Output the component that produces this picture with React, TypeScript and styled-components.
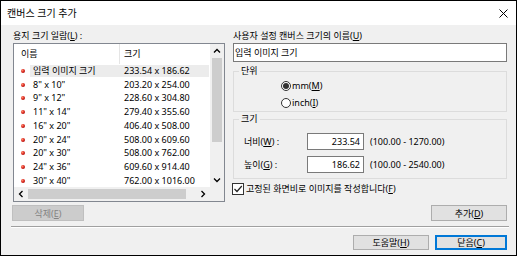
import React from 'react';
import styled, {createGlobalStyle} from "styled-components";

const GlobalStyle = createGlobalStyle`
  html, body {
    margin: 0;
    padding: 0;
    background: #fff;
  }
  body {
    font-family: "Noto Sans", "Noto Sans CJK KR", sans-serif;
    font-size: 9px;
    color: #000;
  }
  * {
    box-sizing: border-box;
  }
  u {
    text-decoration: underline;
    text-underline-offset: 1px;
  }
`

const paperSizes = [
    {name: '입력 이미지 크기', size: '233.54 x 186.62'},
    {name: '8" x 10"', size: '203.20 x 254.00'},
    {name: '9" x 12"', size: '228.60 x 304.80'},
    {name: '11" x 14"', size: '279.40 x 355.60'},
    {name: '16" x 20"', size: '406.40 x 508.00'},
    {name: '20" x 24"', size: '508.00 x 609.60'},
    {name: '20" x 30"', size: '508.00 x 762.00'},
    {name: '24" x 36"', size: '609.60 x 914.40'},
    {name: '30" x 40"', size: '762.00 x 1016.00'},
];

const Chevron = (props: { dir: 'up' | 'down' | 'left' | 'right' }) => {
    const rot = {up: 0, right: 90, down: 180, left: 270}[props.dir];
    return (
        <svg width="8" height="8" viewBox="0 0 8 8" style={{transform: `rotate(${rot}deg)`}}>
            <path d="M1 5.5 L4 2.5 L7 5.5" fill="none" stroke="#000" strokeWidth="1.3"/>
        </svg>
    );
};

export default function App() {
    return (
        <>
            <GlobalStyle/>
            <Window>
                <TitleBar>
                    <Title>캔버스 크기 추가</Title>
                    <svg width="9" height="9" viewBox="0 0 9 9">
                        <path d="M0.5 0.5 L8.5 8.5 M8.5 0.5 L0.5 8.5" stroke="#000" strokeWidth="1"/>
                    </svg>
                </TitleBar>
                <Body>
                    <Columns>
                        <LeftCol>
                            <Label>용지 크기 일람(<u>L</u>) :</Label>
                            <ListBox>
                                <ListContent>
                                    <Header>
                                        <HeaderName>이름</HeaderName>
                                        <HeaderSize>크기</HeaderSize>
                                    </Header>
                                    {paperSizes.map((item, index) => (
                                        <Row key={index}>
                                            <BulletCell><Bullet/></BulletCell>
                                            <RowBody $selected={index === 0}>
                                                <NameCell>{item.name}</NameCell>
                                                <SizeCell>{item.size}</SizeCell>
                                            </RowBody>
                                        </Row>
                                    ))}
                                </ListContent>
                                <VScroll>
                                    <ArrowBox><Chevron dir="up"/></ArrowBox>
                                    <VThumb/>
                                    <Spacer/>
                                    <ArrowBox><Chevron dir="down"/></ArrowBox>
                                </VScroll>
                                <HScroll>
                                    <ArrowBox><Chevron dir="left"/></ArrowBox>
                                    <HThumb/>
                                    <Spacer/>
                                    <ArrowBox><Chevron dir="right"/></ArrowBox>
                                </HScroll>
                                <Corner/>
                            </ListBox>
                            <DeleteButton>삭제(<u>E</u>)</DeleteButton>
                        </LeftCol>
                        <RightCol>
                            <Label>사용자 설정 캔버스 크기의 이름(<u>U</u>)</Label>
                            <NameInput readOnly value="입력 이미지 크기"/>
                            <UnitGroup>
                                <Legend>단위</Legend>
                                <UnitBody>
                                    <RadioRow>
                                        <Radio $checked/>
                                        <span>mm(<u>M</u>)</span>
                                    </RadioRow>
                                    <RadioRow>
                                        <Radio/>
                                        <span>inch(<u>I</u>)</span>
                                    </RadioRow>
                                </UnitBody>
                            </UnitGroup>
                            <SizeGroup>
                                <Legend>크기</Legend>
                                <SizeBody>
                                    <SizeRow>
                                        <SizeLabel>너비(<u>W</u>) :</SizeLabel>
                                        <NumberInput readOnly value="233.54"/>
                                        <Range>(100.00 - 1270.00)</Range>
                                    </SizeRow>
                                    <SizeRow>
                                        <SizeLabel>높이(<u>G</u>) :</SizeLabel>
                                        <NumberInput readOnly value="186.62"/>
                                        <Range>(100.00 - 2540.00)</Range>
                                    </SizeRow>
                                </SizeBody>
                            </SizeGroup>
                            <CheckRow>
                                <CheckBox>
                                    <svg width="10" height="10" viewBox="0 0 10 10">
                                        <path d="M1.5 5 L4 7.5 L8.8 2" fill="none" stroke="#222" strokeWidth="1.2"/>
                                    </svg>
                                </CheckBox>
                                <span>고정된 화면비로 이미지를 작성합니다(<u>F</u>)</span>
                            </CheckRow>
                            <AddButton>추가(<u>D</u>)</AddButton>
                        </RightCol>
                    </Columns>
                    <Separator/>
                    <Footer>
                        <Button $width={76}>도움말(<u>H</u>)</Button>
                        <Button $width={72} $default>닫음(<u>C</u>)</Button>
                    </Footer>
                </Body>
            </Window>
        </>
    );
}

const Window = styled.div`
  width: 517px;
  height: 256px;
  border: 1px solid #000;
  background: #f0f0f0;
  display: flex;
  flex-direction: column;
`
const TitleBar = styled.div`
  height: 24px;
  background: #fff;
  display: flex;
  align-items: center;
  justify-content: space-between;
  padding: 0 8px 0 6px;
`
const Title = styled.span`
  font-size: 10px;
  line-height: 12px;
`
const Body = styled.div`
  flex: 1;
  display: flex;
  flex-direction: column;
  padding: 5px 9px 0 11px;
`
const Columns = styled.div`
  display: flex;
  gap: 8px;
`
const LeftCol = styled.div`
  width: 213px;
  padding-left: 1px;
  display: flex;
  flex-direction: column;
`
const RightCol = styled.div`
  flex: 1;
  display: flex;
  flex-direction: column;
`
const Label = styled.div`
  height: 12px;
  line-height: 12px;
  margin-bottom: 1px;
  white-space: nowrap;
`
const ListBox = styled.div`
  height: 159px;
  border: 1px solid #828790;
  background: #fff;
  display: grid;
  grid-template-columns: 1fr 14px;
  grid-template-rows: 1fr 14px;
`
const ListContent = styled.div`
  overflow: hidden;
`
const Header = styled.div`
  height: 20px;
  display: flex;
  line-height: 20px;
`
const HeaderName = styled.div`
  width: 106px;
  padding-left: 7px;
  border-right: 1px solid #e5e5e5;
`
const HeaderSize = styled.div`
  padding-left: 4px;
`
const Row = styled.div`
  height: 13.75px;
  display: flex;
  align-items: center;
  white-space: nowrap;
`
const BulletCell = styled.div`
  width: 16px;
  padding-left: 7px;
  display: flex;
  align-items: center;
`
const Bullet = styled.span`
  width: 4px;
  height: 4px;
  border-radius: 50%;
  background: radial-gradient(circle at 35% 35%, #ff8a6a 0%, #d8201a 50%, #7a0c08 100%);
`
const RowBody = styled.div<{ $selected?: boolean }>`
  display: flex;
  height: 12px;
  line-height: 12px;
  width: 179px;
  background: ${props => props.$selected ? '#ececec' : 'transparent'};
`
const NameCell = styled.div`
  width: 90px;
  padding-left: 3px;
`
const SizeCell = styled.div`
  padding-left: 4px;
`
const VScroll = styled.div`
  background: #f0f0f0;
  display: flex;
  flex-direction: column;
  align-items: center;
`
const HScroll = styled.div`
  background: #f0f0f0;
  display: flex;
  align-items: center;
`
const Corner = styled.div`
  background: #f0f0f0;
`
const ArrowBox = styled.div`
  width: 14px;
  height: 14px;
  flex-shrink: 0;
  display: flex;
  align-items: center;
  justify-content: center;
`
const Spacer = styled.div`
  flex: 1;
`
const VThumb = styled.div`
  width: 10px;
  height: 84px;
  background: #cdcdcd;
`
const HThumb = styled.div`
  width: 158px;
  height: 10px;
  background: #cdcdcd;
`
const ButtonBase = styled.div`
  display: flex;
  align-items: center;
  justify-content: center;
  background: #e1e1e1;
  border: 1px solid #adadad;
  white-space: nowrap;
`
const DeleteButton = styled(ButtonBase)`
  margin: 3px 0 0 -1px;
  width: 72px;
  height: 16px;
  background: #cccccc;
  border-color: #bfbfbf;
  color: #838383;
`
const AddButton = styled(ButtonBase)`
  margin-top: auto;
  align-self: flex-end;
  width: 76px;
  height: 16px;
`
const Button = styled(ButtonBase)<{ $width: number; $default?: boolean }>`
  width: ${props => props.$width}px;
  height: 15px;
  border-color: ${props => props.$default ? '#0078d7' : '#adadad'};
  box-shadow: ${props => props.$default ? 'inset 0 0 0 1px #0078d7' : 'none'};
`
const NameInput = styled.input`
  height: 19px;
  border: 1px solid #7a7a7a;
  background: #fff;
  padding: 0 0 0 1px;
  font: inherit;
  color: #000;
  outline: none;
  margin: 0;
`
const Group = styled.fieldset`
  margin: 0;
  padding: 0;
  border: 1px solid #dcdcdc;
  min-width: 0;
`
const UnitGroup = styled(Group)`
  margin-top: 3px;
`
const SizeGroup = styled(Group)`
  margin-top: 1px;
`
const Legend = styled.legend`
  margin-left: 5px;
  padding: 0 2px;
  line-height: 12px;
  font-size: 9px;
`
const UnitBody = styled.div`
  padding-left: 47px;
`
const SizeBody = styled.div`
  padding: 8px 0 5px 10px;
  display: flex;
  flex-direction: column;
  gap: 6px;
`
const RadioRow = styled.div`
  height: 17px;
  display: flex;
  align-items: center;
  gap: 1px;
`
const Radio = styled.span<{ $checked?: boolean }>`
  width: 10px;
  height: 10px;
  border-radius: 50%;
  border: 1px solid #333;
  background: #fff;
  display: flex;
  align-items: center;
  justify-content: center;

  &::after {
    content: '';
    display: ${props => props.$checked ? 'block' : 'none'};
    width: 6px;
    height: 6px;
    border-radius: 50%;
    background: #333;
  }
`
const SizeRow = styled.div`
  height: 17px;
  display: flex;
  align-items: center;
`
const SizeLabel = styled.span`
  width: 63px;
`
const NumberInput = styled(NameInput)`
  width: 57px;
  height: 17px;
  text-align: right;
  padding: 0 3px 0 0;
`
const Range = styled.span`
  margin-left: 6px;
`
const CheckRow = styled.div`
  margin: 3px 0 0 -1px;
  height: 13px;
  display: flex;
  align-items: center;
  gap: 2px;
  white-space: nowrap;
`
const CheckBox = styled.span`
  width: 12px;
  height: 12px;
  border: 1px solid #333;
  background: #fff;
  display: flex;
  align-items: center;
  justify-content: center;
`
const Separator = styled.div`
  margin: 5px -2px 0 -1px;
  height: 2px;
  border-top: 1px solid #a0a0a0;
  border-bottom: 1px solid #fff;
`
const Footer = styled.div`
  margin-top: 7px;
  display: flex;
  justify-content: flex-end;
  gap: 6px;
`
